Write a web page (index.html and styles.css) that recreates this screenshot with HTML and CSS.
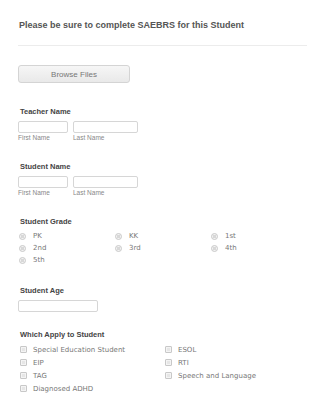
FILE: index.html
```html
<!DOCTYPE html>
<html lang="en">
<head>
  <meta charset="UTF-8">
  <meta name="viewport" content="width=device-width, initial-scale=1.0">
  <title>SAEBRS Referral</title>
  <link rel="stylesheet" href="styles.css">
</head>
<body>
  <form class="form">
    <h1 class="title">Please be sure to complete SAEBRS for this Student</h1>
    <div class="divider"></div>

    <!-- Upload -->
    <button type="button" class="browse">Browse Files</button>

    <!-- Teacher name -->
    <div class="field">
      <div class="label">Teacher Name</div>
      <div class="name-row">
        <div class="name-part">
          <input type="text" class="input first">
          <span class="sublabel">First Name</span>
        </div>
        <div class="name-part">
          <input type="text" class="input last">
          <span class="sublabel">Last Name</span>
        </div>
      </div>
    </div>

    <!-- Student name -->
    <div class="field">
      <div class="label">Student Name</div>
      <div class="name-row">
        <div class="name-part">
          <input type="text" class="input first">
          <span class="sublabel">First Name</span>
        </div>
        <div class="name-part">
          <input type="text" class="input last">
          <span class="sublabel">Last Name</span>
        </div>
      </div>
    </div>

    <!-- Grade -->
    <div class="field">
      <div class="label">Student Grade</div>
      <div class="options grades">
        <label class="option"><span class="radio"></span>PK</label>
        <label class="option"><span class="radio"></span>KK</label>
        <label class="option"><span class="radio"></span>1st</label>
        <label class="option"><span class="radio"></span>2nd</label>
        <label class="option"><span class="radio"></span>3rd</label>
        <label class="option"><span class="radio"></span>4th</label>
        <label class="option"><span class="radio"></span>5th</label>
      </div>
    </div>

    <!-- Age -->
    <div class="field">
      <div class="label">Student Age</div>
      <input type="text" class="input age">
    </div>

    <!-- Checkboxes -->
    <div class="field last-field">
      <div class="label">Which Apply to Student</div>
      <div class="options applies">
        <label class="option"><span class="check"></span>Special Education Student</label>
        <label class="option"><span class="check"></span>ESOL</label>
        <label class="option"><span class="check"></span>EIP</label>
        <label class="option"><span class="check"></span>RTI</label>
        <label class="option"><span class="check"></span>TAG</label>
        <label class="option"><span class="check"></span>Speech and Language</label>
        <label class="option"><span class="check"></span>Diagnosed ADHD</label>
      </div>
    </div>
  </form>
</body>
</html>
```

FILE: styles.css
```css
body {
  margin: 0;
  background: #fff;
  font-family: "Liberation Sans", Arial, sans-serif;
}

.form {
  padding: 18px 18px 0 18px;
}

.title {
  margin: 0 0 0 1px;
  font-size: 9px;
  line-height: 14px;
  font-weight: bold;
  color: #555;
}

.divider {
  margin-top: 13px;
  border-top: 1px solid #ececec;
}

.browse {
  display: block;
  margin-top: 19px;
  width: 112px;
  height: 18px;
  padding: 0;
  border: 1px solid #d4d4d4;
  border-radius: 3px;
  background: linear-gradient(#f6f6f6, #e9e9e9);
  font-family: "Liberation Sans", Arial, sans-serif;
  font-size: 8px;
  color: #777;
}

.field {
  margin-top: 24px;
}

.field + .field {
  margin-top: 20px;
}

.field.last-field {
  margin-top: 18px;
}

.label {
  margin-left: 2px;
  font-size: 7.5px;
  line-height: 10px;
  font-weight: bold;
  color: #444;
}

.name-row {
  display: flex;
  gap: 5px;
  margin-top: 4px;
}

.name-part {
  display: flex;
  flex-direction: column;
}

.input {
  box-sizing: border-box;
  height: 12px;
  margin: 0;
  padding: 0;
  border: 1px solid #d6d6d6;
  border-radius: 2px;
  background: #fff;
}

.input.first {
  width: 50px;
}

.input.last {
  width: 65px;
}

.input.age {
  display: block;
  width: 80px;
  margin-top: 4px;
}

.sublabel {
  font-size: 6.5px;
  line-height: 9px;
  color: #888;
}

.options {
  display: grid;
  margin-top: 3px;
  font-family: "DejaVu Sans", Verdana, sans-serif;
  font-size: 7px;
  color: #777;
}

.grades {
  grid-template-columns: 96px 96px 96px;
  grid-auto-rows: 12px;
  margin-left: 1px;
}

.applies {
  grid-template-columns: 145px 145px;
  grid-auto-rows: 13px;
  margin-left: 2px;
}

.option {
  display: flex;
  align-items: center;
}

.radio {
  box-sizing: border-box;
  width: 7px;
  height: 7px;
  margin-right: 7px;
  border: 1px solid #c8c8c8;
  border-radius: 50%;
  background: radial-gradient(circle, #d8d8d8 0 1.5px, #f2f2f2 2px);
}

.check {
  box-sizing: border-box;
  width: 7px;
  height: 7px;
  margin-right: 6px;
  border: 1px solid #c8c8c8;
  border-radius: 1px;
  background: #e6e6e6;
  box-shadow: inset 0 0 0 1px #f4f4f4;
}
```
